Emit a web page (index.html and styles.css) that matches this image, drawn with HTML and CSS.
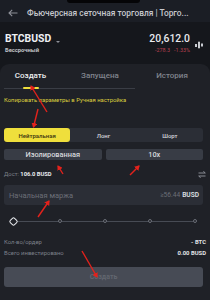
FILE: index.html
```html
<!DOCTYPE html>
<html lang="ru">
<head>
<meta charset="utf-8">
<title>Grid</title>
<link rel="stylesheet" href="styles.css">
</head>
<body>
<div class="screen">
  <div class="notch"></div>
  <header class="topbar">
    <svg class="back" width="10" height="8" viewBox="0 0 10 8"><path d="M9.5 4H1 M4.2 0.8L1 4L4.2 7.2" fill="none" stroke="#8d9098" stroke-width="1.1"/></svg>
    <span class="title">Фьючерсная сеточная торговля | Торго...</span>
  </header>

  <section class="ticker">
    <div class="sym">
      <div class="sym-row"><span class="pair">BTCBUSD</span><span class="caret"></span></div>
      <div class="perp">Бессрочный</div>
    </div>
    <div class="quote">
      <div class="price">20,612.0</div>
      <div class="chg"><span>-278.3</span><span>-1.33%</span></div>
    </div>
    <svg class="kline" width="8" height="8" viewBox="0 0 8 8"><rect x="0" y="3" width="2" height="3" fill="#c9ccd2"/><rect x="3" y="1" width="2" height="6" fill="#c9ccd2"/><rect x="3.7" y="0" width="0.6" height="8" fill="#c9ccd2"/><rect x="6" y="2.5" width="2" height="3" fill="#c9ccd2"/></svg>
  </section>

  <main class="panel">
    <nav class="tabs">
      <span class="tab active">Создать</span>
      <span class="tab">Запущена</span>
      <span class="tab">История</span>
    </nav>
    <div class="divider"></div>

    <p class="copy">Копировать параметры в Ручная настройка</p>

    <div class="segment">
      <span class="seg on">Нейтральная</span>
      <span class="seg">Лонг</span>
      <span class="seg">Шорт</span>
    </div>

    <div class="pair-btns">
      <span class="pbtn">Изолированная</span>
      <span class="pbtn">10x</span>
    </div>

    <div class="avail">
      <span><span class="muted">Дост:</span> <b>106.0 BUSD</b></span>
      <svg width="8" height="7" viewBox="0 0 8 7"><path d="M0.5 2H7.3 M5.3 0.2L7.3 2 M7.5 5H0.7 M2.7 6.8L0.7 5" fill="none" stroke="#9497a0" stroke-width="0.9"/></svg>
    </div>

    <div class="input">
      <span class="ph">Начальная маржа</span>
      <span class="suffix"><span class="min">≥56.44</span><b>BUSD</b></span>
    </div>

    <div class="slider">
      <span class="node first"></span>
      <span class="node"></span>
      <span class="node"></span>
      <span class="node"></span>
      <span class="node"></span>
    </div>

    <div class="row"><span class="muted">Кол-во/ордер</span><b>- BTC</b></div>
    <div class="row"><span class="muted">Всего инвестировано</span><b>0.00 BUSD</b></div>

    <div class="create">Создать</div>
  </main>

  <svg class="arrows" width="210" height="300" viewBox="0 0 210 300">
    <defs>
      <marker id="ah" markerWidth="6" markerHeight="6" refX="4" refY="3" orient="auto" markerUnits="userSpaceOnUse">
        <path d="M0 0L5 3L0 6z" fill="#e3221c"/>
      </marker>
    </defs>
    <g stroke="#e3221c" stroke-width="1.4" fill="none" marker-end="url(#ah)">
      <line x1="47" y1="112" x2="31" y2="86"/>
      <line x1="38" y1="109" x2="33.5" y2="127"/>
      <line x1="63" y1="174" x2="58" y2="166"/>
      <line x1="130" y1="175" x2="139" y2="166"/>
      <line x1="38" y1="217" x2="49" y2="201"/>
      <line x1="82" y1="251" x2="97" y2="277"/>
    </g>
  </svg>
</div>
</body>
</html>
```

FILE: styles.css
```css
* { box-sizing: border-box; margin: 0; padding: 0; }

html, body {
  width: 210px;
  height: 300px;
  background: #15171c;
  overflow: hidden;
}

body {
  font-family: Roboto, "Liberation Sans", "Noto Sans", sans-serif;
  color: #e4e6ea;
}

.screen {
  position: relative;
  width: 210px;
  height: 300px;
  display: flex;
  flex-direction: column;
}

.notch {
  position: absolute;
  top: 0;
  left: 67px;
  width: 73px;
  height: 3px;
  background: #050507;
  border-radius: 0 0 3px 3px;
}

.topbar {
  height: 22px;
  flex: none;
  background: #1b1e25;
  display: flex;
  align-items: center;
  padding-left: 8px;
  gap: 9px;
}

.back { flex: none; margin-top: 4px; }

.title {
  font-size: 8.4px;
  font-weight: 500;
  color: #c5c7cc;
  white-space: nowrap;
  margin-top: 4px;
}

.ticker {
  height: 42px;
  flex: none;
  display: flex;
  align-items: flex-start;
  padding: 11px 0 0 5px;
}

.sym { flex: 1; }

.sym-row { display: flex; align-items: center; gap: 5px; }

.pair {
  font-size: 10.4px;
  font-weight: 700;
  color: #eef0f3;
  line-height: 12px;
}

.caret {
  width: 0;
  height: 0;
  border-left: 2px solid transparent;
  border-right: 2px solid transparent;
  border-top: 2.5px solid #8d9098;
  margin-top: 6px;
}

.perp {
  font-size: 5.8px;
  font-weight: 700;
  color: #c2c4c9;
  margin-top: 1px;
  line-height: 8px;
}

.quote {
  text-align: right;
  margin-right: 5px;
}

.price {
  font-size: 10.4px;
  font-weight: 500;
  color: #e8eaee;
  line-height: 12px;
}

.chg {
  font-size: 5.4px;
  color: #b9404f;
  line-height: 8px;
  margin-top: 1px;
  display: flex;
  gap: 4px;
  justify-content: flex-end;
}

.kline { margin-top: 8px; margin-right: 7px; flex: none; }

.panel {
  flex: 1;
  background: #1f2127;
  border-radius: 9px 9px 0 0;
  padding: 0 7px 0 4px;
  display: flex;
  flex-direction: column;
}

.tabs {
  display: grid;
  grid-template-columns: 61px 78px 66px;
  height: 24px;
  margin-left: -4px;
}

.tab {
  position: relative;
  text-align: center;
  line-height: 24px;
  font-size: 8px;
  font-weight: 500;
  color: #80848d;
}

.tab.active { color: #eceef1; }

.tab.active::after {
  content: "";
  position: absolute;
  left: 50%;
  bottom: -1px;
  width: 16px;
  margin-left: -8px;
  height: 2px;
  background: #efdf3c;
  border-radius: 1px;
}

.divider {
  width: 131px;
  height: 1px;
  background: #3a3d45;
}

.copy {
  margin-top: 6px;
  font-size: 5.9px;
  line-height: 10px;
  color: #ddd03e;
  white-space: nowrap;
}

.segment {
  margin-top: 23px;
  height: 14px;
  background: #2b2e36;
  border-radius: 3px;
  display: grid;
  grid-template-columns: repeat(3, 1fr);
}

.seg {
  display: flex;
  align-items: center;
  justify-content: center;
  font-size: 6px;
  font-weight: 500;
  color: #d4d6da;
  border-radius: 3px;
}

.seg.on {
  background: #efdf3c;
  color: #3a3410;
}

.pair-btns {
  margin-top: 7px;
  display: grid;
  grid-template-columns: 1fr 1fr;
  gap: 4px;
}

.pbtn {
  height: 11px;
  background: #383c45;
  border-radius: 2px;
  display: flex;
  align-items: center;
  justify-content: center;
  font-size: 7.4px;
  font-weight: 500;
  color: #d6d8dc;
}

.avail {
  margin-top: 9px;
  height: 10px;
  display: flex;
  align-items: center;
  justify-content: space-between;
  font-size: 5.8px;
  padding-right: 0;
  margin-right: -3px;
}

.avail b { color: #e8eaee; font-weight: 700; }

.muted { color: #7c8089; }

.input {
  margin-top: 6px;
  height: 20px;
  background: #2b2e36;
  border-radius: 3px;
  display: flex;
  align-items: center;
  justify-content: space-between;
  padding: 0 4px 0 5px;
}

.ph {
  font-size: 7.5px;
  color: #6b6f78;
}

.suffix {
  display: flex;
  gap: 2px;
  font-size: 6.6px;
}

.min { color: #6b6f78; }

.suffix b { color: #dfe1e5; font-weight: 600; }

.slider {
  margin-top: 10px;
  height: 12px;
  display: flex;
  align-items: center;
  justify-content: space-between;
  padding: 0 6px 0 6px;
  background: linear-gradient(#474b54, #474b54) no-repeat 10px 50% / calc(100% - 20px) 1px;
}

.node {
  width: 4.5px;
  height: 4.5px;
  border-radius: 50%;
  border: 1px solid #6a6e77;
  background: #1f2127;
}

.node.first {
  width: 7px;
  height: 7px;
  border: 1.6px solid #e8eaee;
  transform: rotate(45deg);
  border-radius: 2px;
}

.row {
  height: 10px;
  display: flex;
  align-items: center;
  justify-content: space-between;
  font-size: 5.9px;
  margin-right: -3px;
}

.row:first-of-type { }

.slider + .row { margin-top: 10px; }
.row + .row { margin-top: 1px; }

.row b { color: #e2e4e8; font-weight: 700; }

.create {
  margin-top: 9px;
  height: 20px;
  background: #474b55;
  border-radius: 3px;
  display: flex;
  align-items: center;
  justify-content: center;
  font-size: 7px;
  font-weight: 700;
  color: #62666f;
}

.arrows {
  position: absolute;
  top: 0;
  left: 0;
  pointer-events: none;
}
```
